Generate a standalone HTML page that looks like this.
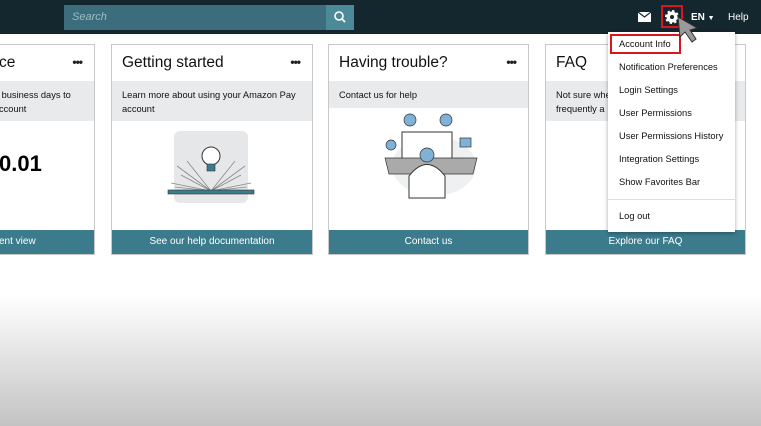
<!DOCTYPE html><html><head><style>
*{margin:0;padding:0;box-sizing:border-box}
body{width:761px;height:426px;overflow:hidden;position:relative;font-family:"Liberation Sans",sans-serif;background:linear-gradient(#fff 0,#fff 295px,#c3c3c3 426px)}
.hdr{position:absolute;left:0;top:0;width:761px;height:34px;background:#14262e}
.search{position:absolute;left:64px;top:5px;width:262px;height:25px;background:#3c6d7c;color:#9fbcc4;font-size:11px;font-style:italic;padding:6px 8px}
.sbtn{position:absolute;left:326px;top:5px;width:28px;height:25px;background:#4c8a9a}
.card{position:absolute;top:44px;height:211px;background:#fff;border:1px solid #c8c8c8}
.card h2{position:absolute;left:10px;top:9px;font-size:15.5px;font-weight:normal;color:#111}
.dots{position:absolute;right:12px;top:10px;font-size:12px;font-weight:bold;color:#222;letter-spacing:-1px}
.band{position:absolute;left:0;right:0;top:36px;background:#e8eaec;font-size:9.3px;color:#111;padding:7px 10px;line-height:14px;white-space:nowrap}
.btn{position:absolute;left:0;right:0;bottom:0;height:24px;background:#3b7b8c;color:#fff;font-size:10px;text-align:center;line-height:24px}
.menu{position:absolute;left:608px;top:32px;width:127px;height:200px;background:#fff;box-shadow:0 1px 4px rgba(0,0,0,.35);font-size:9.3px;color:#111}
.menu div{position:absolute;left:11px}
.red{position:absolute;border:2px solid #d9161c}
</style></head><body>
<div class="hdr"></div>
<div class="search">Search</div>
<div class="sbtn"><svg width="28" height="25"><circle cx="13" cy="11" r="4" fill="none" stroke="#fff" stroke-width="1.6"/><line x1="16" y1="14" x2="19" y2="17" stroke="#fff" stroke-width="1.8"/></svg></div>
<svg style="position:absolute;left:638px;top:12px" width="13" height="10"><rect width="13" height="10" fill="#fff"/><path d="M0 0L6.5 5L13 0" stroke="#14262e" fill="none" stroke-width="1.2"/></svg>
<svg style="position:absolute;left:664px;top:9px" width="16" height="16" viewBox="0 0 16 16"><circle cx="8" cy="8" r="5.5" fill="#fff" stroke="#fff" stroke-width="3" stroke-dasharray="2.2 2.1"/><circle cx="8" cy="8" r="2" fill="#14262e"/></svg>
<div class="red" style="left:661px;top:5px;width:22px;height:23px"></div>
<div style="position:absolute;left:691px;top:12px;color:#fff;font-size:10px;font-weight:bold">EN <span style="font-size:7px">▼</span></div>
<div style="position:absolute;left:728px;top:12px;color:#fff;font-size:10px">Help</div>

<div class="card" style="left:-10px;width:105px"><h2 style="left:8px">ce</h2><span class="dots">•••</span>
<div class="band" style="height:40px;padding-left:8px">&nbsp;business days to<br>ccount</div>
<div style="position:absolute;left:8px;top:106px;font-size:22px;font-weight:bold">0.01</div>
<div class="btn" style="text-align:left;padding-left:8px">ent view</div></div>

<div class="card" style="left:111px;width:202px"><h2>Getting started</h2><span class="dots">•••</span>
<div class="band" style="height:40px">Learn more about using your Amazon Pay<br>account</div>
<svg style="position:absolute;left:55px;top:86px" width="90" height="75"><rect x="7" y="0" width="74" height="72" rx="6" fill="#e6e7e9"/><g stroke="#888" stroke-width=".8"><path d="M44 60L10 35M44 60L14 44M44 60L4 52M44 60L8 56M44 60L78 35M44 60L74 44M44 60L84 52M44 60L80 56M44 60L20 30M44 60L68 30"/></g><rect x="1" y="59" width="86" height="4" fill="#3b7b8c" stroke="#333" stroke-width=".6"/><circle cx="44" cy="25" r="9" fill="#fff" stroke="#333"/><rect x="40" y="33" width="8" height="7" fill="#3b7b8c" stroke="#333" stroke-width=".6"/></svg>
<div class="btn">See our help documentation</div></div>

<div class="card" style="left:328px;width:201px"><h2>Having trouble?</h2><span class="dots">•••</span>
<div class="band" style="height:27px">Contact us for help</div>
<svg style="position:absolute;left:55px;top:66px" width="100" height="90"><ellipse cx="50" cy="55" rx="42" ry="30" fill="#eef0f2"/><circle cx="26" cy="9" r="6" fill="#7fb2d6" stroke="#333" stroke-width=".7"/><circle cx="62" cy="9" r="6" fill="#7fb2d6" stroke="#333" stroke-width=".7"/><circle cx="7" cy="34" r="5" fill="#7fb2d6" stroke="#333" stroke-width=".7"/><rect x="76" y="27" width="11" height="9" fill="#7fb2d6" stroke="#333" stroke-width=".7"/><rect x="18" y="21" width="50" height="34" fill="#fff" stroke="#333"/><path d="M1 47H93L89 63H5Z" fill="#aaa" stroke="#333" stroke-width=".7"/><path d="M25 87V65Q43 42 61 65V87Z" fill="#fff" stroke="#333"/><circle cx="43" cy="44" r="7" fill="#7fb2d6" stroke="#333" stroke-width=".7"/></svg>
<div class="btn">Contact us</div></div>

<div class="card" style="left:545px;width:201px"><h2>FAQ</h2>
<div class="band" style="height:40px">Not sure whe<br>frequently a</div>
<div class="btn">Explore our FAQ</div></div>

<div class="menu">
<div style="top:7px">Account Info</div>
<div style="top:30px">Notification Preferences</div>
<div style="top:53px">Login Settings</div>
<div style="top:76px">User Permissions</div>
<div style="top:99px">User Permissions History</div>
<div style="top:122px">Integration Settings</div>
<div style="top:145px">Show Favorites Bar</div>
<span style="position:absolute;left:0;right:0;top:167px;border-top:1px solid #ddd"></span>
<div style="top:179px">Log out</div>
</div>
<div class="red" style="left:610px;top:34px;width:71px;height:20px"></div>
<svg style="position:absolute;left:676px;top:15px" width="28" height="30"><path d="M2 2L4 22L9 17L16 27L20 24L14 15L21 13Z" fill="#999" stroke="#333" stroke-width="1"/></svg>
</body></html>
